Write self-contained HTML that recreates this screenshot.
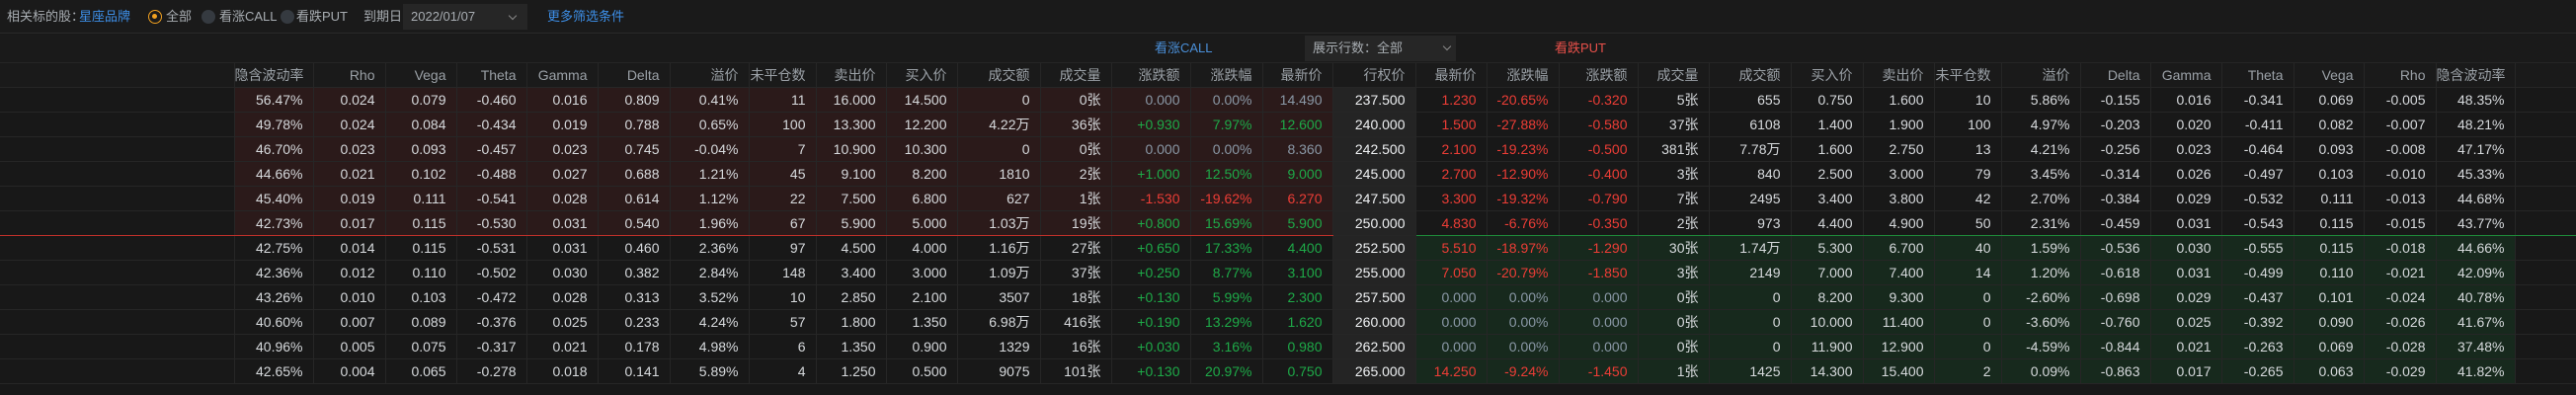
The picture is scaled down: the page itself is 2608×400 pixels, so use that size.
<!DOCTYPE html>
<html><head><meta charset="utf-8"><style>
*{margin:0;padding:0;box-sizing:border-box}
body{width:2608px;height:400px;background:#181818;font-family:"Liberation Sans","Noto Sans CJK SC",sans-serif;color:#d6d9dc;overflow:hidden;position:relative}
.bar1{position:absolute;left:0;top:0;width:2608px;height:34px;background:#1a1a1a;border-bottom:1px solid #2a2a2a;font-size:13px;color:#a8adb2}
.bar1 span{position:absolute;top:0;line-height:34px}
.blue{color:#3d8fe8}
.bar1 .rad{position:absolute;top:10px;width:14px;height:14px;border-radius:50%;background:#353a40}
.bar1 .rad.on{background:none;border:1.5px solid #f0a020}
.bar1 .rad.on::after{content:"";position:absolute;left:3px;top:3px;width:5px;height:5px;border-radius:50%;background:#f0a020}
.bar1 .date{position:absolute;left:408px;top:4px;width:126px;height:26px;background:#262626;line-height:26px;padding-left:8px;color:#a8adb2}
.chev{position:absolute;width:6px;height:6px;border-right:1px solid #888;border-bottom:1px solid #888;transform:rotate(45deg)}
.bar2{position:absolute;left:0;top:35px;width:2608px;height:28px;background:#1a1a1a;font-size:13px}
.bar2 span{position:absolute;line-height:28px;top:0}
.sel{position:absolute;left:1321px;top:1px;width:153px;height:26px;background:#262626;color:#a8adb2;line-height:26px;padding-left:8px}
table{position:absolute;left:0;top:63px;border-collapse:collapse;table-layout:fixed;width:2608px;font-size:14px}
td,th{height:25px;border:1px solid #262626;text-align:right;padding-right:10px;white-space:nowrap;overflow:hidden;line-height:23px;font-weight:normal}
th{color:#9aa0a6;background:#1a1a1a}
td:first-child,th:first-child{border-left:none}
td:last-child,th:last-child{border-right:none}
tr.a td:nth-child(n+2):nth-child(-n+16){background:#2b1a1a}
tr.b td:nth-child(n+18):nth-child(-n+32){background:#17291d}
td:nth-child(17){background:#242424;color:#eef0f2}
th:nth-child(17){background:#1a1a1a}
tr.m td:nth-child(-n+16){border-bottom:1px solid #c0302a}
tr.m td:nth-child(n+18){border-bottom:1px solid #1e8a3a}
.r{color:#ec3d36}.g{color:#1eaa48}.z{color:#8a98a6}
</style></head><body>
<div class="bar1">
<span style="left:7px">相关标的股：</span><span class="blue" style="left:80px">星座品牌</span>
<div class="rad on" style="left:150px"></div><span style="left:168px">全部</span>
<div class="rad" style="left:204px"></div><span style="left:222px">看涨CALL</span>
<div class="rad" style="left:284px"></div><span style="left:300px">看跌PUT</span>
<span style="left:368px">到期日</span>
<div class="date">2022/01/07</div><div class="chev" style="left:516px;top:13px"></div>
<span class="blue" style="left:554px">更多筛选条件</span>
</div>
<div class="bar2">
<span class="blue" style="left:1169px;color:#4a8fd8">看涨CALL</span>
<div class="sel">展示行数：全部</div><div class="chev" style="left:1462px;top:9px"></div>
<span style="left:1574px;color:#e8504a">看跌PUT</span>
</div>
<table>
<colgroup>
<col style="width:237px"><col style="width:80px"><col style="width:73px"><col style="width:72px"><col style="width:71px"><col style="width:72px"><col style="width:73px"><col style="width:80px"><col style="width:68px"><col style="width:71px"><col style="width:72px"><col style="width:84px"><col style="width:72px"><col style="width:80px"><col style="width:73px"><col style="width:71px"><col style="width:84px"><col style="width:72px"><col style="width:73px"><col style="width:80px"><col style="width:72px"><col style="width:83px"><col style="width:73px"><col style="width:72px"><col style="width:68px"><col style="width:80px"><col style="width:71px"><col style="width:72px"><col style="width:73px"><col style="width:71px"><col style="width:73px"><col style="width:80px"><col style="width:62px">
</colgroup>
<tr><th></th><th>隐含波动率</th><th>Rho</th><th>Vega</th><th>Theta</th><th>Gamma</th><th>Delta</th><th>溢价</th><th>未平仓数</th><th>卖出价</th><th>买入价</th><th>成交额</th><th>成交量</th><th>涨跌额</th><th>涨跌幅</th><th>最新价</th><th>行权价</th><th>最新价</th><th>涨跌幅</th><th>涨跌额</th><th>成交量</th><th>成交额</th><th>买入价</th><th>卖出价</th><th>未平仓数</th><th>溢价</th><th>Delta</th><th>Gamma</th><th>Theta</th><th>Vega</th><th>Rho</th><th>隐含波动率</th><th></th></tr>
<tr class="a"><td></td><td>56.47%</td><td>0.024</td><td>0.079</td><td>-0.460</td><td>0.016</td><td>0.809</td><td>0.41%</td><td>11</td><td>16.000</td><td>14.500</td><td>0</td><td>0张</td><td class="z">0.000</td><td class="z">0.00%</td><td class="z">14.490</td><td>237.500</td><td class="r">1.230</td><td class="r">-20.65%</td><td class="r">-0.320</td><td>5张</td><td>655</td><td>0.750</td><td>1.600</td><td>10</td><td>5.86%</td><td>-0.155</td><td>0.016</td><td>-0.341</td><td>0.069</td><td>-0.005</td><td>48.35%</td><td></td></tr>
<tr class="a"><td></td><td>49.78%</td><td>0.024</td><td>0.084</td><td>-0.434</td><td>0.019</td><td>0.788</td><td>0.65%</td><td>100</td><td>13.300</td><td>12.200</td><td>4.22万</td><td>36张</td><td class="g">+0.930</td><td class="g">7.97%</td><td class="g">12.600</td><td>240.000</td><td class="r">1.500</td><td class="r">-27.88%</td><td class="r">-0.580</td><td>37张</td><td>6108</td><td>1.400</td><td>1.900</td><td>100</td><td>4.97%</td><td>-0.203</td><td>0.020</td><td>-0.411</td><td>0.082</td><td>-0.007</td><td>48.21%</td><td></td></tr>
<tr class="a"><td></td><td>46.70%</td><td>0.023</td><td>0.093</td><td>-0.457</td><td>0.023</td><td>0.745</td><td>-0.04%</td><td>7</td><td>10.900</td><td>10.300</td><td>0</td><td>0张</td><td class="z">0.000</td><td class="z">0.00%</td><td class="z">8.360</td><td>242.500</td><td class="r">2.100</td><td class="r">-19.23%</td><td class="r">-0.500</td><td>381张</td><td>7.78万</td><td>1.600</td><td>2.750</td><td>13</td><td>4.21%</td><td>-0.256</td><td>0.023</td><td>-0.464</td><td>0.093</td><td>-0.008</td><td>47.17%</td><td></td></tr>
<tr class="a"><td></td><td>44.66%</td><td>0.021</td><td>0.102</td><td>-0.488</td><td>0.027</td><td>0.688</td><td>1.21%</td><td>45</td><td>9.100</td><td>8.200</td><td>1810</td><td>2张</td><td class="g">+1.000</td><td class="g">12.50%</td><td class="g">9.000</td><td>245.000</td><td class="r">2.700</td><td class="r">-12.90%</td><td class="r">-0.400</td><td>3张</td><td>840</td><td>2.500</td><td>3.000</td><td>79</td><td>3.45%</td><td>-0.314</td><td>0.026</td><td>-0.497</td><td>0.103</td><td>-0.010</td><td>45.33%</td><td></td></tr>
<tr class="a"><td></td><td>45.40%</td><td>0.019</td><td>0.111</td><td>-0.541</td><td>0.028</td><td>0.614</td><td>1.12%</td><td>22</td><td>7.500</td><td>6.800</td><td>627</td><td>1张</td><td class="r">-1.530</td><td class="r">-19.62%</td><td class="r">6.270</td><td>247.500</td><td class="r">3.300</td><td class="r">-19.32%</td><td class="r">-0.790</td><td>7张</td><td>2495</td><td>3.400</td><td>3.800</td><td>42</td><td>2.70%</td><td>-0.384</td><td>0.029</td><td>-0.532</td><td>0.111</td><td>-0.013</td><td>44.68%</td><td></td></tr>
<tr class="a m"><td></td><td>42.73%</td><td>0.017</td><td>0.115</td><td>-0.530</td><td>0.031</td><td>0.540</td><td>1.96%</td><td>67</td><td>5.900</td><td>5.000</td><td>1.03万</td><td>19张</td><td class="g">+0.800</td><td class="g">15.69%</td><td class="g">5.900</td><td>250.000</td><td class="r">4.830</td><td class="r">-6.76%</td><td class="r">-0.350</td><td>2张</td><td>973</td><td>4.400</td><td>4.900</td><td>50</td><td>2.31%</td><td>-0.459</td><td>0.031</td><td>-0.543</td><td>0.115</td><td>-0.015</td><td>43.77%</td><td></td></tr>
<tr class="b"><td></td><td>42.75%</td><td>0.014</td><td>0.115</td><td>-0.531</td><td>0.031</td><td>0.460</td><td>2.36%</td><td>97</td><td>4.500</td><td>4.000</td><td>1.16万</td><td>27张</td><td class="g">+0.650</td><td class="g">17.33%</td><td class="g">4.400</td><td>252.500</td><td class="r">5.510</td><td class="r">-18.97%</td><td class="r">-1.290</td><td>30张</td><td>1.74万</td><td>5.300</td><td>6.700</td><td>40</td><td>1.59%</td><td>-0.536</td><td>0.030</td><td>-0.555</td><td>0.115</td><td>-0.018</td><td>44.66%</td><td></td></tr>
<tr class="b"><td></td><td>42.36%</td><td>0.012</td><td>0.110</td><td>-0.502</td><td>0.030</td><td>0.382</td><td>2.84%</td><td>148</td><td>3.400</td><td>3.000</td><td>1.09万</td><td>37张</td><td class="g">+0.250</td><td class="g">8.77%</td><td class="g">3.100</td><td>255.000</td><td class="r">7.050</td><td class="r">-20.79%</td><td class="r">-1.850</td><td>3张</td><td>2149</td><td>7.000</td><td>7.400</td><td>14</td><td>1.20%</td><td>-0.618</td><td>0.031</td><td>-0.499</td><td>0.110</td><td>-0.021</td><td>42.09%</td><td></td></tr>
<tr class="b"><td></td><td>43.26%</td><td>0.010</td><td>0.103</td><td>-0.472</td><td>0.028</td><td>0.313</td><td>3.52%</td><td>10</td><td>2.850</td><td>2.100</td><td>3507</td><td>18张</td><td class="g">+0.130</td><td class="g">5.99%</td><td class="g">2.300</td><td>257.500</td><td class="z">0.000</td><td class="z">0.00%</td><td class="z">0.000</td><td>0张</td><td>0</td><td>8.200</td><td>9.300</td><td>0</td><td>-2.60%</td><td>-0.698</td><td>0.029</td><td>-0.437</td><td>0.101</td><td>-0.024</td><td>40.78%</td><td></td></tr>
<tr class="b"><td></td><td>40.60%</td><td>0.007</td><td>0.089</td><td>-0.376</td><td>0.025</td><td>0.233</td><td>4.24%</td><td>57</td><td>1.800</td><td>1.350</td><td>6.98万</td><td>416张</td><td class="g">+0.190</td><td class="g">13.29%</td><td class="g">1.620</td><td>260.000</td><td class="z">0.000</td><td class="z">0.00%</td><td class="z">0.000</td><td>0张</td><td>0</td><td>10.000</td><td>11.400</td><td>0</td><td>-3.60%</td><td>-0.760</td><td>0.025</td><td>-0.392</td><td>0.090</td><td>-0.026</td><td>41.67%</td><td></td></tr>
<tr class="b"><td></td><td>40.96%</td><td>0.005</td><td>0.075</td><td>-0.317</td><td>0.021</td><td>0.178</td><td>4.98%</td><td>6</td><td>1.350</td><td>0.900</td><td>1329</td><td>16张</td><td class="g">+0.030</td><td class="g">3.16%</td><td class="g">0.980</td><td>262.500</td><td class="z">0.000</td><td class="z">0.00%</td><td class="z">0.000</td><td>0张</td><td>0</td><td>11.900</td><td>12.900</td><td>0</td><td>-4.59%</td><td>-0.844</td><td>0.021</td><td>-0.263</td><td>0.069</td><td>-0.028</td><td>37.48%</td><td></td></tr>
<tr class="b"><td></td><td>42.65%</td><td>0.004</td><td>0.065</td><td>-0.278</td><td>0.018</td><td>0.141</td><td>5.89%</td><td>4</td><td>1.250</td><td>0.500</td><td>9075</td><td>101张</td><td class="g">+0.130</td><td class="g">20.97%</td><td class="g">0.750</td><td>265.000</td><td class="r">14.250</td><td class="r">-9.24%</td><td class="r">-1.450</td><td>1张</td><td>1425</td><td>14.300</td><td>15.400</td><td>2</td><td>0.09%</td><td>-0.863</td><td>0.017</td><td>-0.265</td><td>0.063</td><td>-0.029</td><td>41.82%</td><td></td></tr>
</table>
</body></html>
